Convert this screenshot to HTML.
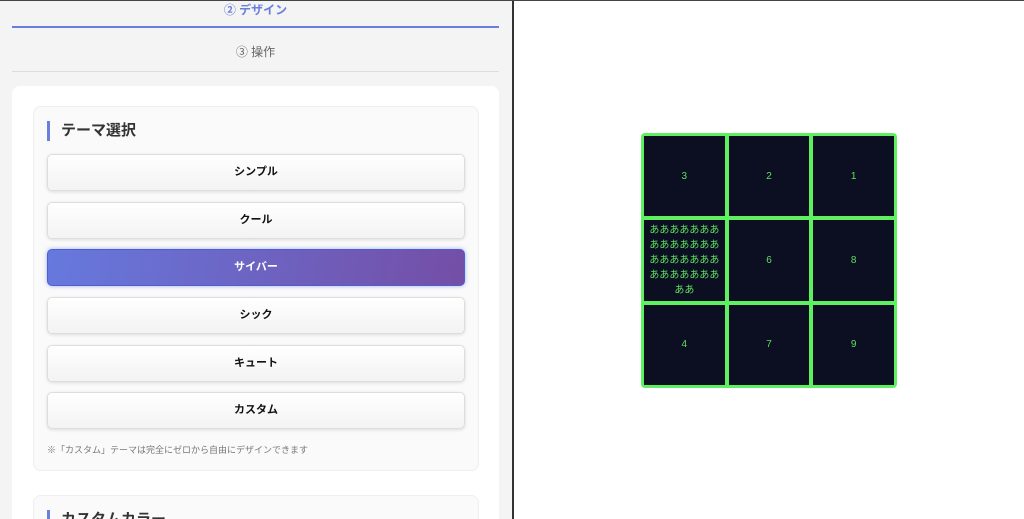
<!DOCTYPE html>
<html><head><meta charset="utf-8"><style>
*{box-sizing:border-box;margin:0;padding:0}
html,body{width:1024px;height:519px;overflow:hidden}
body{background:#fff;font-family:"Liberation Sans","Noto Sans CJK JP",sans-serif;position:relative}
.left{position:absolute;left:0;top:0;width:514px;height:519px;background:#f4f4f4;border-right:2px solid #333;overflow:hidden}
.topline{position:absolute;left:0;top:0;width:1024px;height:1px;background:#444}
.tab1{position:absolute;left:12px;top:0;width:487px;height:28px;border-bottom:2px solid #6a7fdc;text-align:center;color:#6a7fdc;font-size:12px;line-height:20px;font-weight:bold}
.tab2{position:absolute;left:12px;top:36px;width:487px;height:36px;border-bottom:1px solid #ddd;text-align:center;color:#666;font-size:12px;line-height:32px}
.card{position:absolute;left:12px;top:86px;width:487px;height:433px;background:#fff;border-radius:8px 8px 0 0;overflow:hidden}
.sec{position:absolute;left:21px;top:20px;width:446px;height:365px;background:#fafafa;border:1px solid #eee;border-radius:8px}
.sec2{position:absolute;left:21px;top:409px;width:446px;height:60px;background:#fafafa;border:1px solid #eee;border-radius:8px}
.h{position:absolute;left:13px;top:14px;border-left:3px solid #6a7fdc;padding-left:11px;font-size:15px;font-weight:bold;color:#333;line-height:20px}
.btn{position:absolute;left:13px;width:418px;height:37px;background:linear-gradient(#fff,#f3f3f3);border:1px solid #ddd;border-radius:5px;box-shadow:0 1px 3px rgba(0,0,0,.12);text-align:center;font-size:11px;font-weight:bold;line-height:35px;color:#111}
.act{background:linear-gradient(100deg,#6679de,#744ea6);color:#fff;border:1px solid #4c5fd0;box-shadow:0 0 4px rgba(80,100,220,.5)}
.note{position:absolute;left:13px;top:336px;font-size:9px;color:#777}
.grid{position:absolute;left:641px;top:133px;width:256px;height:255px;background:#5ef060;border-radius:4px;padding:3px;display:grid;grid-template-columns:repeat(3,1fr);grid-template-rows:repeat(3,1fr);gap:4px}
.grid div{background:#0c0e22;color:#5ee05e;font-size:10px;display:flex;align-items:center;justify-content:center;text-align:center;line-height:15px;padding:0 5px}
</style></head><body>
<div class="left">
<div class="tab1">② デザイン</div>
<div class="tab2">③ 操作</div>
<div class="card">
<div class="sec">
<div class="h">テーマ選択</div>
<div class="btn" style="top:47px">シンプル</div>
<div class="btn" style="top:95px">クール</div>
<div class="btn act" style="top:142px">サイバー</div>
<div class="btn" style="top:190px">シック</div>
<div class="btn" style="top:238px">キュート</div>
<div class="btn" style="top:285px">カスタム</div>
<div class="note">※「カスタム」テーマは完全にゼロから自由にデザインできます</div>
</div>
<div class="sec2"><div class="h">カスタムカラー</div></div>
</div>
</div>
<div class="topline"></div>
<div class="grid">
<div>3</div><div>2</div><div>1</div>
<div>ああああああああああああああああああああああああああああああ</div><div>6</div><div>8</div>
<div>4</div><div>7</div><div>9</div>
</div>
</body></html>
